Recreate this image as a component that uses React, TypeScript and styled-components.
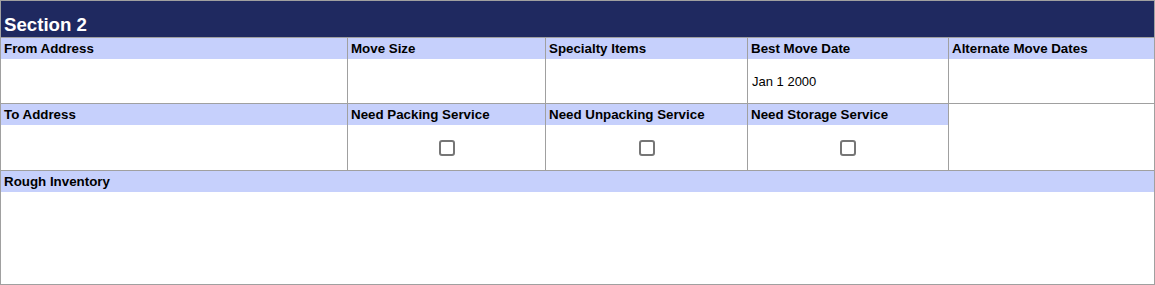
import React from 'react'
import styled, { createGlobalStyle } from 'styled-components'

const GlobalStyle = createGlobalStyle`
  body {
    margin: 0;
    background: #fff;
    font-family: "Liberation Sans", Arial, sans-serif;
  }
`

const Panel = styled.div`
  width: 1155px;
  box-sizing: border-box;
  border: 1px solid #a0a0a0;
  background: #a0a0a0;
`

const Title = styled.div`
  height: 36px;
  box-sizing: border-box;
  padding: 13px 0 0 3px;
  background: #1f2960;
  color: #fff;
  font-size: 18.67px;
  font-weight: bold;
  line-height: 21px;
`

const Grid = styled.div`
  display: grid;
  grid-template-columns: 346px 197px 201px 200px 205px;
  grid-template-rows: 65px 66px 113px;
  gap: 1px;
  padding-top: 1px;
`

const Cell = styled.div<{ $span?: number }>`
  display: flex;
  flex-direction: column;
  background: #fff;
  grid-column: ${({ $span }) => ($span ? `span ${$span}` : 'auto')};
`

const Label = styled.div`
  height: 21px;
  padding-left: 3px;
  background: #c6d0fc;
  color: #000;
  font-size: 13.33px;
  font-weight: bold;
  line-height: 21px;
  white-space: nowrap;
`

const Value = styled.div<{ $center?: boolean }>`
  flex: 1;
  display: flex;
  align-items: center;
  justify-content: ${({ $center }) => ($center ? 'center' : 'flex-start')};
  padding-left: ${({ $center }) => ($center ? '0' : '4px')};
  font-size: 13px;
  color: #000;
`

const Check = styled.input.attrs({ type: 'checkbox' })`
  appearance: none;
  width: 16px;
  height: 16px;
  margin: 0;
  box-sizing: border-box;
  border: 2px solid #767676;
  border-radius: 3px;
  background: #fff;
`

type Field = { label?: string; value?: string; check?: boolean; span?: number }

const fields: Field[] = [
  { label: 'From Address' },
  { label: 'Move Size' },
  { label: 'Specialty Items' },
  { label: 'Best Move Date', value: 'Jan 1 2000' },
  { label: 'Alternate Move Dates' },
  { label: 'To Address' },
  { label: 'Need Packing Service', check: true },
  { label: 'Need Unpacking Service', check: true },
  { label: 'Need Storage Service', check: true },
  {},
  { label: 'Rough Inventory', span: 5 },
]

export default function App() {
  return (
    <>
      <GlobalStyle />
      <Panel>
        <Title>Section 2</Title>
        <Grid>
          {fields.map((f, i) => (
            <Cell key={i} $span={f.span}>
              {f.label && <Label>{f.label}</Label>}
              <Value $center={f.check}>
                {f.check ? <Check /> : f.value}
              </Value>
            </Cell>
          ))}
        </Grid>
      </Panel>
    </>
  )
}
